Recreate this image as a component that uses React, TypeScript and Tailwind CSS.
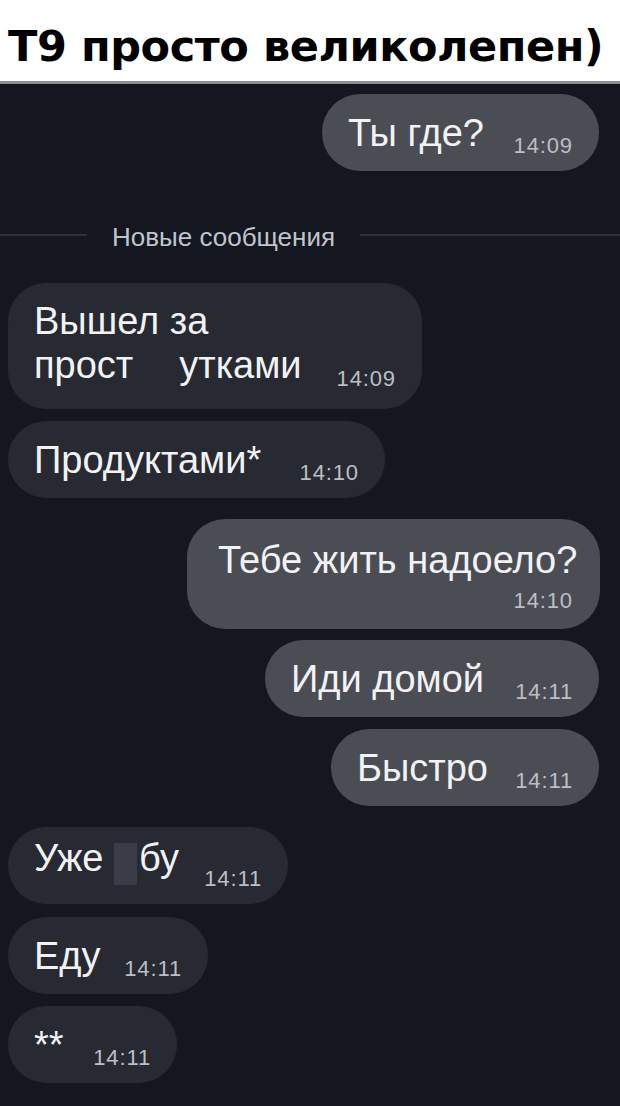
import React from "react";

type Msg = {
  text: React.ReactNode;
  time: string;
  out?: boolean;
  width: string;
  mt: string;
};

const msgs: Msg[] = [
  { text: "Продуктами*", time: "14:10", width: "w-[377px]", mt: "mt-[12px]" },
];

// Single-line bubble: text on the left, time pinned to the right
function Bubble({ text, time, out, width, mt }: Msg) {
  return (
    <div
      className={`${mt} ${width} h-[77px] rounded-[38px] flex items-end justify-between pl-[26px] pr-[26px] pb-[19px] ${
        out ? "self-end mr-[21px] bg-[#4b4d55]" : "self-start ml-[8px] bg-[#272a33]"
      }`}
    >
      <span className="text-[38px] leading-none text-[#f2f2f4] whitespace-nowrap">{text}</span>
      <span className="text-[22px] leading-none tracking-[0.04em] text-[#bcbec4] mb-[-5px] whitespace-nowrap">
        {time}
      </span>
    </div>
  );
}

export default function App() {
  return (
    <div className="w-[620px] h-[1106px] overflow-hidden bg-[#14171f] flex flex-col" style={{ fontFamily: '"Liberation Sans", Arial, sans-serif' }}>
      {/* caption */}
      <div className="h-[84px] bg-white border-b-[3px] border-[#8d8f95] flex items-center pl-[8px] pt-[12px] shrink-0">
        <h1 className="text-[43px] font-bold text-black leading-none tracking-[-0.01em] whitespace-nowrap" style={{ fontFamily: '"DejaVu Sans", sans-serif' }}>
          T9 просто великолепен)
        </h1>
      </div>

      <Bubble text="Ты где?" time="14:09" out width="w-[277px]" mt="mt-[10px]" />

      {/* new messages divider */}
      <div className="mt-[51px] h-[30px] flex items-center gap-[25px]">
        <div className="w-[87px] h-[2px] bg-[#2c3039] mb-[5px]" />
        <span className="text-[26px] leading-[30px] text-[#c0c4cb] whitespace-nowrap">Новые сообщения</span>
        <div className="flex-1 h-[2px] bg-[#2c3039] mb-[5px]" />
      </div>

      {/* two-line bubble */}
      <div className="mt-[31px] ml-[8px] w-[414px] h-[126px] rounded-[38px] bg-[#272a33] flex items-end justify-between pl-[26px] pr-[26px] pt-[16px] pb-[22px]">
        <div className="text-[38px] leading-[44px] text-[#f2f2f4] self-start">
          <div>Вышел за</div>
          <div className="whitespace-nowrap">
            прост<span className="inline-block w-[46px]" />утками
          </div>
        </div>
        <span className="text-[22px] leading-none tracking-[0.04em] text-[#bcbec4] mb-[-3px]">14:09</span>
      </div>

      {msgs.map((m, i) => (
        <Bubble key={i} {...m} />
      ))}

      {/* bubble with time under the text */}
      <div className="mt-[21px] self-end mr-[20px] w-[413px] h-[110px] rounded-[38px] bg-[#4b4d55] flex flex-col pl-[31px] pr-[27px] pt-[22px]">
        <span className="text-[38px] leading-none text-[#f2f2f4] whitespace-nowrap">Тебе жить надоело?</span>
        <span className="self-end mt-[11px] text-[22px] leading-none tracking-[0.04em] text-[#bcbec4]">14:10</span>
      </div>

      <Bubble text="Иди домой" time="14:11" out width="w-[334px]" mt="mt-[11px]" />
      <Bubble text="Быстро" time="14:11" out width="w-[268px]" mt="mt-[12px]" />

      <Bubble
        text={
          <>
            Уже <span className="inline-block w-[23px] h-[42px] bg-[#3a3d47] align-[-14px] mr-[2px]" />бу
          </>
        }
        time="14:11"
        width="w-[280px]"
        mt="mt-[21px]"
      />
      <Bubble text="Еду" time="14:11" width="w-[200px]" mt="mt-[13px]" />
      <Bubble text="**" time="14:11" width="w-[169px]" mt="mt-[12px]" />
    </div>
  );
}
